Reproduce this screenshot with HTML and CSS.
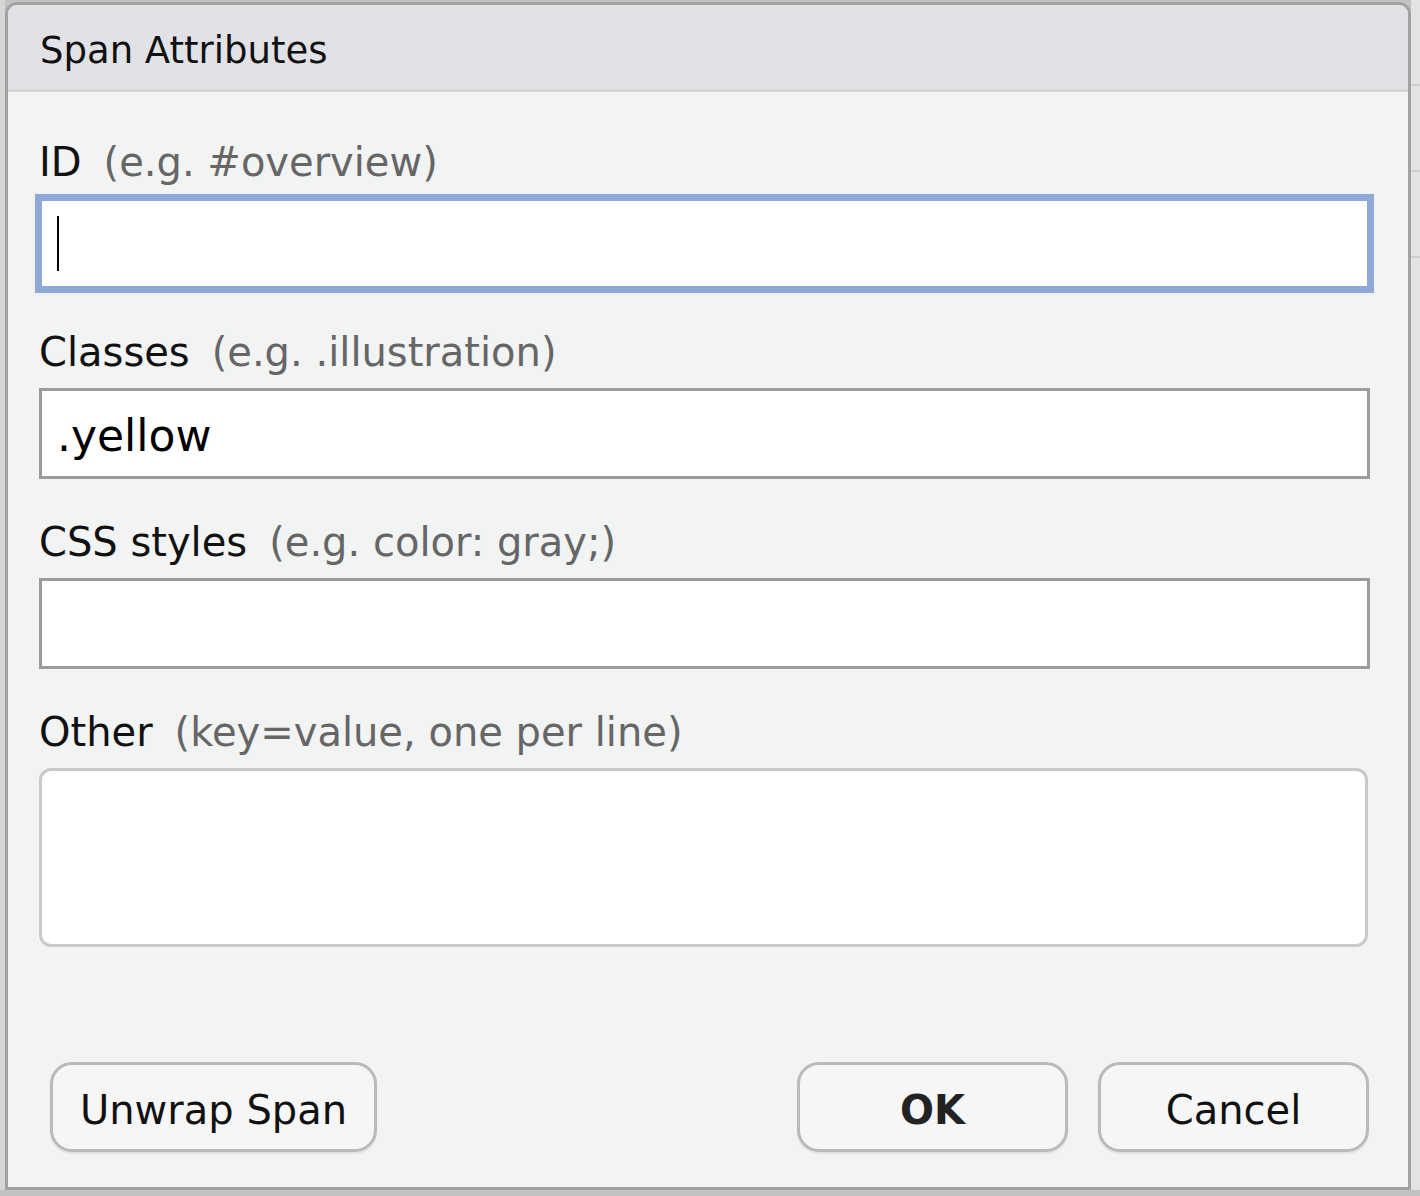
FILE: index.html
```html
<!DOCTYPE html>
<html lang="en">
<head>
<meta charset="utf-8">
<title>Span Attributes</title>
<link rel="stylesheet" href="styles.css">
</head>
<body>
<div class="screen">
  <div class="edge-left"></div>
  <div class="dialog">
    <div class="titlebar">Span Attributes</div>
    <div class="content">
      <div class="field">
        <div class="label">ID<span class="hint">(e.g. #overview)</span></div>
        <div class="input focused"><span class="caret"></span></div>
      </div>
      <div class="field">
        <div class="label">Classes<span class="hint">(e.g. .illustration)</span></div>
        <div class="input">.yellow</div>
      </div>
      <div class="field">
        <div class="label">CSS styles<span class="hint">(e.g. color: gray;)</span></div>
        <div class="input"></div>
      </div>
      <div class="field">
        <div class="label">Other<span class="hint">(key=value, one per line)</span></div>
        <div class="textarea"></div>
      </div>
      <div class="footer">
        <button class="btn btn-unwrap">Unwrap Span</button>
        <div class="spacer"></div>
        <button class="btn btn-ok">OK</button>
        <button class="btn btn-cancel">Cancel</button>
      </div>
    </div>
  </div>
  <div class="edge-right">
    <div class="er-line"></div>
    <div class="er-line"></div>
    <div class="er-line"></div>
  </div>
</div>
</body>
</html>
```

FILE: styles.css
```css
html, body {
  margin: 0;
  padding: 0;
}
body {
  width: 1420px;
  height: 1196px;
  overflow: hidden;
  background: #c2c2c2;
  font-family: "DejaVu Sans", "Liberation Sans", sans-serif;
  color: #111;
}
.screen {
  display: flex;
  height: 1196px;
}
.edge-left {
  width: 5px;
  height: 1190px;
  background: #d6d6d6;
}
.edge-right {
  flex: 1;
  height: 1190px;
  background: #e3e3e3;
  padding-top: 84px;
  box-sizing: border-box;
}
.er-line {
  height: 2px;
  background: #cfcfcf;
  margin-bottom: 84px;
}
.dialog {
  margin-top: 2px;
  width: 1406px;
  height: 1188px;
  box-sizing: border-box;
  border: 3px solid #a2a2a2;
  border-radius: 12px 12px 0 0;
  background: #f2f3f3;
  display: flex;
  flex-direction: column;
  overflow: hidden;
}
.titlebar {
  height: 87px;
  box-sizing: border-box;
  padding: 7px 0 0 32px;
  line-height: 77px;
  font-size: 37px;
  background: #e1e2e6;
  border-bottom: 3px solid #d5d6d9;
  flex: none;
}
.content {
  flex: 1;
  display: flex;
  flex-direction: column;
  padding: 46px 0 0 31px;
}
.field {
  margin-bottom: 39px;
}
.label {
  font-size: 40px;
  line-height: 48px;
  height: 48px;
  margin-bottom: 12px;
  color: #111;
  white-space: nowrap;
}
.hint {
  color: #666;
  margin-left: 22px;
}
.input {
  width: 1331px;
  height: 91px;
  box-sizing: border-box;
  border: 3px solid #9b9b9b;
  background: #fff;
  padding: 4px 15px 0 15px;
  font-size: 44px;
  line-height: 81px;
  color: #000;
  display: flex;
  align-items: center;
}
.input.focused {
  border-color: #8ea9d8;
  outline: 4px solid #8ea9d8;
  padding-top: 0;
}
.caret {
  width: 2px;
  height: 55px;
  background: #000;
}
.textarea {
  width: 1329px;
  height: 179px;
  box-sizing: border-box;
  border: 3px solid #c9c9c9;
  border-radius: 12px;
  background: #fff;
}
.footer {
  margin-top: auto;
  display: flex;
  gap: 30px;
  padding: 0 39px 35px 11px;
}
.spacer {
  flex: 1;
}
.btn {
  flex: none;
  height: 90px;
  box-sizing: border-box;
  border: 3px solid #bababa;
  border-radius: 22px;
  background: #f6f6f7;
  box-shadow: 0 2px 2px rgba(0, 0, 0, 0.07);
  font-family: "DejaVu Sans", "Liberation Sans", sans-serif;
  font-size: 40px;
  color: #111;
  padding: 5px 0 0 0;
}
.btn-unwrap {
  width: 327px;
}
.btn-ok {
  width: 271px;
  font-weight: bold;
  color: #222;
}
.btn-cancel {
  width: 271px;
}
```
